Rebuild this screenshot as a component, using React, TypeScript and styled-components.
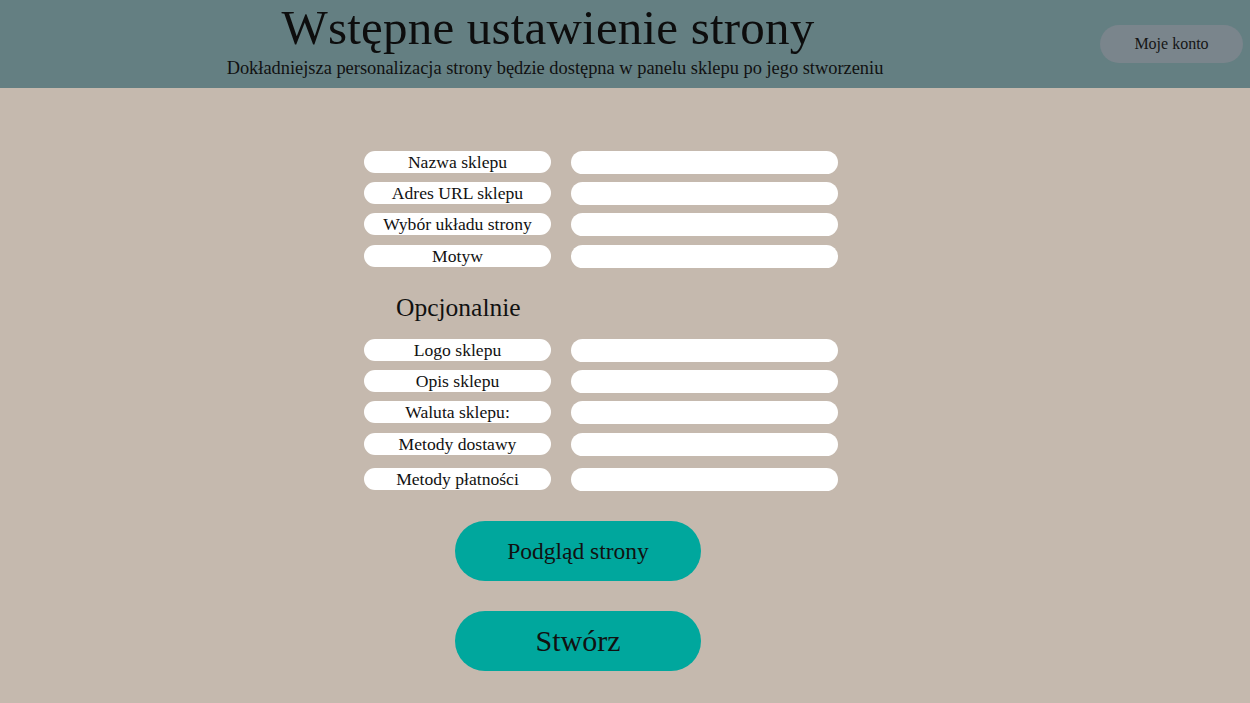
import React from "react";
import styled, { createGlobalStyle } from "styled-components";

const Global = createGlobalStyle`
  html, body { margin: 0; padding: 0; }
  body {
    background: #c5b9ae;
    font-family: "Liberation Serif", "DejaVu Serif", serif;
    color: #111;
  }
`;

const Page = styled.div`
  width: 1250px;
  height: 703px;
  display: flex;
  flex-direction: column;
  background: #c5b9ae;
  overflow: hidden;
`;

const Header = styled.header`
  height: 88px;
  background: #647f82;
  display: flex;
  align-items: flex-start;
  box-sizing: border-box;
`;

const TitleBlock = styled.div`
  width: 1110px;
  display: flex;
  flex-direction: column;
  align-items: center;
`;

const Title = styled.h1`
  margin: 0 14px 0 0;
  font-weight: normal;
  font-size: 49px;
  line-height: 56px;
  letter-spacing: 0.2px;
  color: #0d0d0d;
`;

const Subtitle = styled.p`
  margin: 0;
  margin-top: 1px;
  font-size: 18.4px;
  line-height: 22px;
  color: #111;
`;

const AccountButton = styled.button`
  margin-top: 25px;
  margin-left: -10px;
  width: 143px;
  height: 38px;
  border: none;
  border-radius: 19px;
  background: #7a858c;
  font-family: inherit;
  font-size: 16px;
  color: #151515;
  padding: 0;
  cursor: pointer;
`;

const Main = styled.main`
  display: flex;
  flex-direction: column;
  padding-left: 364px;
  padding-top: 63px;
`;

const Row = styled.div<{ $mt: number }>`
  display: flex;
  align-items: flex-start;
  gap: 20px;
  margin-top: ${(p) => p.$mt}px;
`;

const Label = styled.div`
  width: 187px;
  height: 22px;
  border-radius: 11px;
  background: #fff;
  display: flex;
  align-items: center;
  justify-content: center;
  font-size: 17.6px;
  line-height: 22px;
  color: #111;
`;

const Field = styled.input`
  width: 267px;
  height: 23px;
  box-sizing: border-box;
  border: none;
  border-radius: 11.5px;
  background: #fff;
  outline: none;
  padding: 0 10px;
  font-family: inherit;
  font-size: 15px;
`;

const SectionTitle = styled.h2`
  margin: 0;
  margin-top: 26px;
  margin-left: 32px;
  font-weight: normal;
  font-size: 25.5px;
  line-height: 28px;
  color: #111;
`;

const Actions = styled.div`
  display: flex;
  flex-direction: column;
  gap: 30px;
  margin-top: 30px;
  margin-left: 91px;
`;

const ActionButton = styled.button<{ $size: number }>`
  width: 246px;
  height: 60px;
  border: none;
  border-radius: 30px;
  background: #00a79d;
  font-family: inherit;
  font-size: ${(p) => p.$size}px;
  color: #111;
  padding: 0;
  cursor: pointer;
`;

const required = [
  { label: "Nazwa sklepu", mt: 0 },
  { label: "Adres URL sklepu", mt: 8 },
  { label: "Wybór układu strony", mt: 8 },
  { label: "Motyw", mt: 9 },
];

const optional = [
  { label: "Logo sklepu", mt: 17 },
  { label: "Opis sklepu", mt: 8 },
  { label: "Waluta sklepu:", mt: 8 },
  { label: "Metody dostawy", mt: 9 },
  { label: "Metody płatności", mt: 12 },
];

export default function App() {
  return (
    <>
      <Global />
      <Page>
        <Header>
          <TitleBlock>
            <Title>Wstępne ustawienie strony</Title>
            <Subtitle>
              Dokładniejsza personalizacja strony będzie dostępna w panelu sklepu po jego stworzeniu
            </Subtitle>
          </TitleBlock>
          <AccountButton>Moje konto</AccountButton>
        </Header>
        <Main>
          {required.map((r) => (
            <Row key={r.label} $mt={r.mt}>
              <Label>{r.label}</Label>
              <Field />
            </Row>
          ))}
          <SectionTitle>Opcjonalnie</SectionTitle>
          {optional.map((r) => (
            <Row key={r.label} $mt={r.mt}>
              <Label>{r.label}</Label>
              <Field />
            </Row>
          ))}
          <Actions>
            <ActionButton $size={23.5}>Podgląd strony</ActionButton>
            <ActionButton $size={30}>Stwórz</ActionButton>
          </Actions>
        </Main>
      </Page>
    </>
  );
}
